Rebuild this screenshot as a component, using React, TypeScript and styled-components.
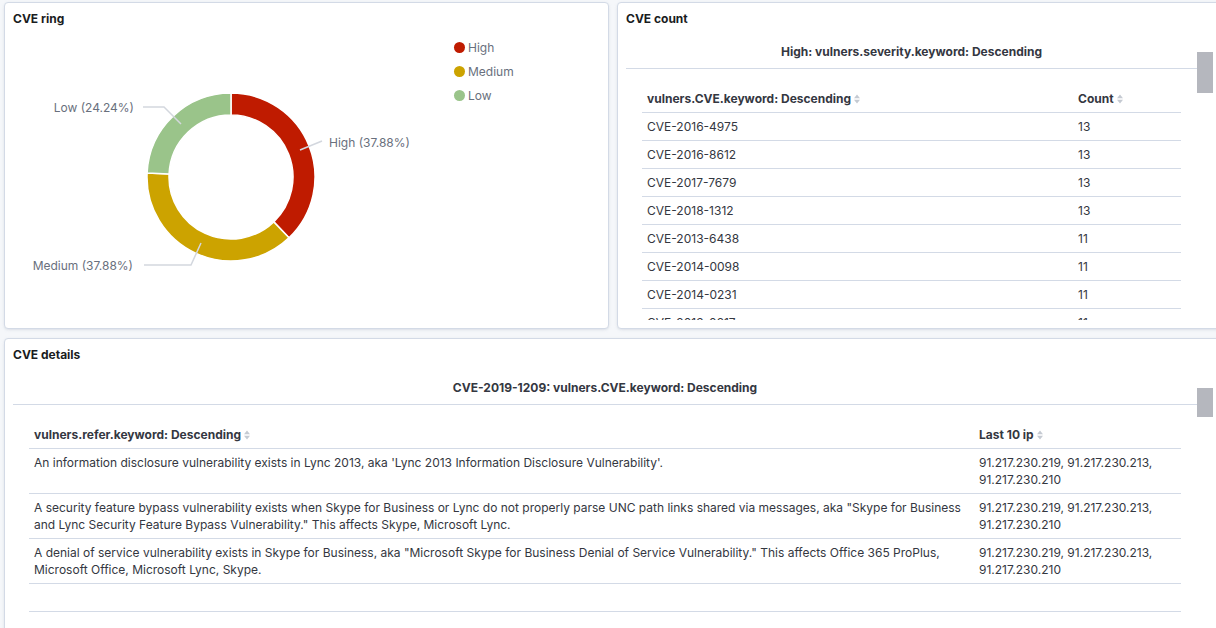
import React from 'react';
import styled, { createGlobalStyle } from 'styled-components';

const GlobalStyle = createGlobalStyle`
  *, *::before, *::after {
    box-sizing: border-box;
  }
  html, body {
    margin: 0;
    padding: 0;
    background: #f5f7fa;
    overflow: hidden;
  }
  body {
    font-family: Inter, "Noto Sans", "Liberation Sans", sans-serif;
    color: #343741;
  }
`;

const Dashboard = styled.div`
  display: grid;
  grid-template-columns: 605px 605px;
  grid-template-rows: 327px 340px;
  column-gap: 8px;
  row-gap: 9px;
  width: 1222px;
  padding: 2px 0 0 4px;
`;

const Panel = styled.section<{ $wide?: boolean }>`
  grid-column: ${(p) => (p.$wide ? '1 / -1' : 'auto')};
  display: flex;
  flex-direction: column;
  min-height: 0;
  padding: 8px;
  background: #fff;
  border: 1px solid #d3dae6;
  border-radius: 4px;
  box-shadow: 0 1px 2px rgba(152, 162, 179, 0.15), 0 1px 5px -2px rgba(152, 162, 179, 0.3);
  overflow: hidden;
`;

const PanelTitle = styled.h2`
  margin: 0 0 10px;
  padding-top: 1px;
  font-size: 12px;
  line-height: 14px;
  font-weight: 700;
  color: #1a1c21;
`;

/* ---------- donut ---------- */

const ChartBody = styled.div`
  flex: 1;
  display: flex;
  align-items: flex-start;
`;

const ChartSvg = styled.svg`
  flex: none;
  display: block;
  font-family: Inter, "Noto Sans", "Liberation Sans", sans-serif;
  font-size: 12px;
`;

const Legend = styled.ul`
  list-style: none;
  margin: -1px 0 0;
  padding: 0;
  display: flex;
  flex-direction: column;
`;

const LegendItem = styled.li`
  display: flex;
  align-items: center;
  gap: 3px;
  height: 24px;
  font-size: 12px;
  color: #69707d;
`;

const Dot = styled.span<{ $color: string }>`
  width: 11px;
  height: 11px;
  border-radius: 50%;
  background: ${(p) => p.$color};
`;

/* ---------- scrolling table area ---------- */

const ScrollFrame = styled.div`
  flex: 1;
  min-height: 0;
  display: flex;
`;

const ScrollContent = styled.div`
  flex: 1;
  min-width: 0;
  overflow: hidden;
`;

const ScrollTrack = styled.div`
  flex: none;
  width: 16px;
  padding-top: 16px;
`;

const ScrollThumb = styled.div<{ $height: number }>`
  height: ${(p) => p.$height}px;
  background: #b5b7be;
`;

const TableCaption = styled.div`
  padding: 9px 0 9px;
  border-bottom: 1px solid #d3dae6;
  text-align: center;
  font-size: 12px;
  line-height: 14px;
  font-weight: 700;
  color: #343741;
`;

const DataTable = styled.table`
  width: calc(100% - 32px);
  margin: 15px 16px 0;
  border-collapse: collapse;
  table-layout: fixed;
`;

const HeadCell = styled.th<{ $width?: number }>`
  width: ${(p) => (p.$width ? `${p.$width}px` : 'auto')};
  padding: 6px 5px 5px;
  border-bottom: 1px solid #d3dae6;
  text-align: left;
  font-size: 12px;
  line-height: 17px;
  font-weight: 700;
  color: #343741;
  white-space: nowrap;
`;

const Cell = styled.td`
  padding: 5px;
  border-bottom: 1px solid #d3dae6;
  vertical-align: top;
  font-size: 12px;
  line-height: 17px;
  color: #343741;
`;

const SortSvg = styled.svg`
  margin-left: 2px;
  vertical-align: -2px;
`;

const SortIcon = () => (
  <SortSvg width="8" height="12" viewBox="0 0 8 12">
    <path d="M1 5.2 L4 1.6 L7 5.2 Z M1 6.8 L4 10.4 L7 6.8 Z" fill="#c5cad2" />
  </SortSvg>
);

const severities = [
  { name: 'High', pct: 37.88, color: '#bf1b00' },
  { name: 'Medium', pct: 37.88, color: '#cca300' },
  { name: 'Low', pct: 24.24, color: '#9ac48a' },
];

const CX = 218;
const CY = 141;
const R_OUT = 84;
const R_IN = 62;

const pt = (r: number, deg: number) => {
  const a = (deg * Math.PI) / 180;
  return [CX + r * Math.sin(a), CY - r * Math.cos(a)];
};

const arcPath = (a0: number, a1: number) => {
  const large = a1 - a0 > 180 ? 1 : 0;
  const [x0, y0] = pt(R_OUT, a0);
  const [x1, y1] = pt(R_OUT, a1);
  const [x2, y2] = pt(R_IN, a1);
  const [x3, y3] = pt(R_IN, a0);
  return `M${x0} ${y0} A${R_OUT} ${R_OUT} 0 ${large} 1 ${x1} ${y1} L${x2} ${y2} A${R_IN} ${R_IN} 0 ${large} 0 ${x3} ${y3} Z`;
};

// label leader lines, measured from the chart
const labels = [
  { text: 'High (37.88%)', x: 316, y: 106, anchor: 'start', line: '287,114 309,105' },
  { text: 'Medium (37.88%)', x: 120, y: 229, anchor: 'end', line: '188,207 178,229 131,229' },
  { text: 'Low (24.24%)', x: 121, y: 71, anchor: 'end', line: '168,88 151,71 130,71' },
];

const DonutChart = () => {
  let start = 0;
  const slices = severities.map((s) => {
    const end = start + (s.pct / 100) * 360;
    const d = arcPath(start, end);
    start = end;
    return { ...s, d };
  });

  return (
    <ChartSvg width="441" height="284" viewBox="0 0 441 284">
      {slices.map((s) => (
        <path key={s.name} d={s.d} fill={s.color} stroke="#fff" strokeWidth="1.5" />
      ))}
      {labels.map((l) => (
        <g key={l.text}>
          <polyline points={l.line} fill="none" stroke="#d3d7de" strokeWidth="1.5" />
          <text x={l.x} y={l.y} textAnchor={l.anchor as 'start' | 'end'} dominantBaseline="central" fill="#69707d">
            {l.text}
          </text>
        </g>
      ))}
    </ChartSvg>
  );
};

const cveCounts = [
  ['CVE-2016-4975', 13],
  ['CVE-2016-8612', 13],
  ['CVE-2017-7679', 13],
  ['CVE-2018-1312', 13],
  ['CVE-2013-6438', 11],
  ['CVE-2014-0098', 11],
  ['CVE-2014-0231', 11],
  ['CVE-2013-0217', 11],
];

const ips = '91.217.230.219, 91.217.230.213, 91.217.230.210';

const details = [
  "An information disclosure vulnerability exists in Lync 2013, aka 'Lync 2013 Information Disclosure Vulnerability'.",
  'A security feature bypass vulnerability exists when Skype for Business or Lync do not properly parse UNC path links shared via messages, aka "Skype for Business and Lync Security Feature Bypass Vulnerability." This affects Skype, Microsoft Lync.',
  'A denial of service vulnerability exists in Skype for Business, aka "Microsoft Skype for Business Denial of Service Vulnerability." This affects Office 365 ProPlus, Microsoft Office, Microsoft Lync, Skype.',
];

const App = () => (
  <>
    <GlobalStyle />
    <Dashboard>
      <Panel>
        <PanelTitle>CVE ring</PanelTitle>
        <ChartBody>
          <DonutChart />
          <Legend>
            {severities.map((s) => (
              <LegendItem key={s.name}>
                <Dot $color={s.color} />
                {s.name}
              </LegendItem>
            ))}
          </Legend>
        </ChartBody>
      </Panel>

      <Panel>
        <PanelTitle>CVE count</PanelTitle>
        <ScrollFrame>
          <ScrollContent>
            <TableCaption>High: vulners.severity.keyword: Descending</TableCaption>
            <DataTable>
              <thead>
                <tr>
                  <HeadCell>
                    vulners.CVE.keyword: Descending
                    <SortIcon />
                  </HeadCell>
                  <HeadCell $width={108}>
                    Count
                    <SortIcon />
                  </HeadCell>
                </tr>
              </thead>
              <tbody>
                {cveCounts.map(([cve, count]) => (
                  <tr key={cve}>
                    <Cell>{cve}</Cell>
                    <Cell>{count}</Cell>
                  </tr>
                ))}
              </tbody>
            </DataTable>
          </ScrollContent>
          <ScrollTrack>
            <ScrollThumb $height={41} />
          </ScrollTrack>
        </ScrollFrame>
      </Panel>

      <Panel $wide>
        <PanelTitle>CVE details</PanelTitle>
        <ScrollFrame>
          <ScrollContent>
            <TableCaption>CVE-2019-1209: vulners.CVE.keyword: Descending</TableCaption>
            <DataTable>
              <thead>
                <tr>
                  <HeadCell>
                    vulners.refer.keyword: Descending
                    <SortIcon />
                  </HeadCell>
                  <HeadCell $width={207}>
                    Last 10 ip
                    <SortIcon />
                  </HeadCell>
                </tr>
              </thead>
              <tbody>
                {details.map((text) => (
                  <tr key={text}>
                    <Cell>{text}</Cell>
                    <Cell>{ips}</Cell>
                  </tr>
                ))}
                <tr>
                  <Cell>{'\u00a0'}</Cell>
                  <Cell>{'\u00a0'}</Cell>
                </tr>
              </tbody>
            </DataTable>
          </ScrollContent>
          <ScrollTrack>
            <ScrollThumb $height={29} />
          </ScrollTrack>
        </ScrollFrame>
      </Panel>
    </Dashboard>
  </>
);

export default App;
